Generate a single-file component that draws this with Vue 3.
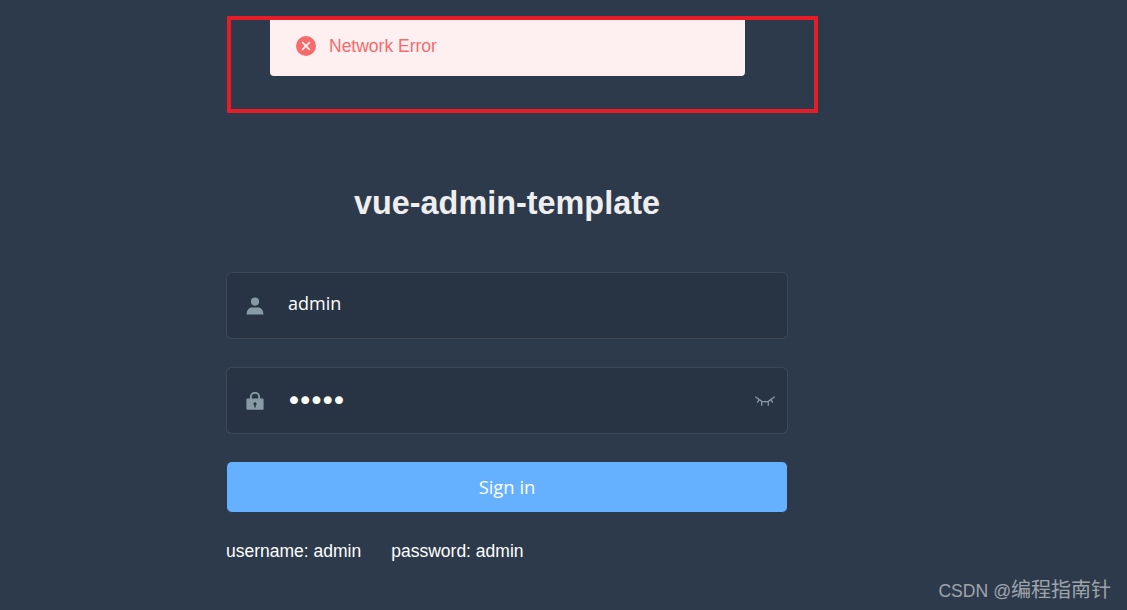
<template>
  <div class="login-container">
    <!-- message and red annotation lie over the page -->
    <div class="message">
      <svg class="message-icon" viewBox="0 0 20 20">
        <circle cx="10" cy="10" r="10" fill="#f56c6c" />
        <path d="M6.2 6.2l7.6 7.6M13.8 6.2l-7.6 7.6" stroke="#fef0f0" stroke-width="1.7" fill="none" />
      </svg>
      <span class="message-text">Network Error</span>
    </div>
    <div class="annotation"></div>

    <form class="login-form" @submit.prevent>
      <h3 class="title">vue-admin-template</h3>

      <div class="form-item">
        <svg class="field-icon" viewBox="0 0 18 18">
          <circle cx="9" cy="4.6" r="4.1" fill="#889aa4" />
          <path d="M0.6 17.4c0-4.6 2.6-7 5.4-7h6c2.8 0 5.4 2.4 5.4 7z" fill="#889aa4" />
        </svg>
        <input class="field-input" type="text" :value="username" />
      </div>

      <div class="form-item">
        <svg class="field-icon" viewBox="0 0 18 18">
          <path d="M4.8 7V5a4.2 4.2 0 0 1 8.4 0V7" fill="none" stroke="#889aa4" stroke-width="1.9" />
          <path fill-rule="evenodd" fill="#889aa4" d="M1.4 6.4h15.2a1 1 0 0 1 1 1v9.4a1 1 0 0 1-1 1H1.4a1 1 0 0 1-1-1V7.4a1 1 0 0 1 1-1zM9 10.2a1.6 1.6 0 0 0-.7 3v2.2h1.4v-2.2a1.6 1.6 0 0 0-.7-3z" />
        </svg>
        <input class="field-input password" type="password" :value="password" />
        <svg class="eye-icon" viewBox="0 0 20 10">
          <path d="M.3 .7L6.7 5.3Q10 6.2 13.3 5.3L19.7 .7M6.7 5.3V9.7M13.3 5.3V9.7M2.3 6.7L4.3 3.3M17.7 6.7L15.7 3.3" fill="none" stroke="#889aa4" stroke-width="1.3" />
        </svg>
      </div>

      <button class="submit" type="button">Sign in</button>

      <div class="tips">
        <span>username: admin</span>
        <span>password: admin</span>
      </div>
    </form>

    <div class="watermark"><span class="watermark-latin">CSDN @</span>编程指南针</div>
  </div>
</template>

<script setup>
import { ref } from 'vue'

const username = ref('admin')
const password = ref('admin')
</script>

<style>
html,
body {
  margin: 0;
  background: #2d3a4b;
}
</style>

<style scoped>
.login-container {
  position: relative;
  height: 610px;
  overflow: hidden;
  background: #2d3a4b;
}

.annotation {
  position: absolute;
  left: 227px;
  top: 16px;
  width: 583px;
  height: 89px;
  border: 4px solid #e81c26;
  border-radius: 1px;
}

.message {
  position: absolute;
  left: 270px;
  top: 16px;
  width: 475px;
  height: 60px;
  box-sizing: border-box;
  padding-left: 26px;
  display: flex;
  align-items: center;
  background: #fef0f0;
  border-radius: 4px;
}

.message-icon {
  width: 20px;
  height: 20px;
}

.message-text {
  margin-left: 13px;
  font-family: "Liberation Sans", Arial, sans-serif;
  font-size: 17.5px;
  color: #f56c6c;
}

.login-form {
  width: 562px;
  margin-left: 226px;
  padding-top: 180px;
}

.title {
  margin: 0 0 46px;
  height: 46px;
  line-height: 46px;
  text-align: center;
  font-family: "Liberation Sans", Arial, sans-serif;
  font-size: 32.4px;
  font-weight: 700;
  color: #eee;
}

.form-item {
  height: 67px;
  box-sizing: border-box;
  margin-bottom: 28px;
  padding-left: 19px;
  display: flex;
  align-items: center;
  position: relative;
  background: #283443;
  border: 1px solid rgba(255, 255, 255, 0.1);
  border-radius: 6px;
}

.field-icon {
  width: 18px;
  height: 18px;
  flex: none;
}

.field-input {
  flex: 1;
  min-width: 0;
  margin-left: 24px;
  padding: 0 0 5px;
  border: 0;
  outline: 0;
  background: transparent;
  font-family: "Open Sans", sans-serif;
  font-size: 18px;
  color: #fff;
}

/* bullets in the reference are bigger than any font's at 18px */
.field-input.password {
  margin-left: 22px;
  padding: 0;
  font-family: "DejaVu Sans", sans-serif;
  font-size: 27px;
  letter-spacing: -4.7px;
}

.eye-icon {
  position: absolute;
  right: 12px;
  top: 28px;
  width: 20px;
  height: 10px;
}

.submit {
  display: block;
  width: 100%;
  height: 52px;
  margin-top: -1px;
  padding: 0 0 2px;
  border: 1px solid #2d3a4b;
  border-radius: 6px;
  background: #66b1ff;
  font-family: "Open Sans", sans-serif;
  font-size: 18.4px;
  color: #fff;
}

.tips {
  margin-top: 27px;
  display: flex;
  gap: 30px;
  font-family: "Liberation Sans", Arial, sans-serif;
  font-size: 17.5px;
  line-height: 22px;
  color: #fff;
}

.watermark {
  position: absolute;
  right: 16px;
  top: 577px;
  font-family: "Noto Sans CJK SC", sans-serif;
  font-size: 20px;
  line-height: 24px;
  color: rgba(255, 255, 255, 0.55);
}

.watermark-latin {
  font-family: "Liberation Sans", sans-serif;
  font-size: 17.6px;
}
</style>
